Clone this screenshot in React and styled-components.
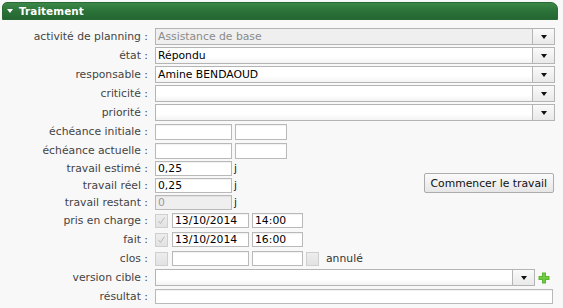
import React from "react";
import styled, { createGlobalStyle } from "styled-components";

const GlobalStyle = createGlobalStyle`
  html, body {
    margin: 0;
    padding: 0;
    background: #f8f8f8;
  }
  body {
    font-family: "DejaVu Sans", Verdana, sans-serif;
    font-size: 10.8px;
    color: #333;
  }
`;

const StPanel = styled.div`
  width: 563px;
  height: 308px;
  padding: 2px 0 0 2px;
  box-sizing: border-box;
  overflow: hidden;
`;

const StHeader = styled.div`
  display: flex;
  align-items: center;
  gap: 6px;
  width: 556px;
  height: 18px;
  box-sizing: border-box;
  padding-left: 4px;
  border-radius: 5px 7px 0 0;
  background: linear-gradient(#3c8748 0%, #2b7339 50%, #236631 100%);
  border: 1px solid #2a6a35;
  color: #fff;
  font-weight: bold;
  font-size: 10.4px;
  letter-spacing: 0.1px;
`;

const Caret = styled.span`
  width: 0;
  height: 0;
  border-left: 3px solid transparent;
  border-right: 3px solid transparent;
  border-top: 4px solid #fff;
`;

const StForm = styled.div`
  display: flex;
  flex-direction: column;
  padding-top: 7px;
`;

const Row = styled.div`
  display: flex;
  align-items: center;
  height: ${(p) => p.$h || 19}px;
`;

const Label = styled.div`
  width: 146px;
  flex: none;
  text-align: right;
  margin-right: 7px;
  white-space: nowrap;
  color: #444;
`;

const Select = styled.div`
  display: flex;
  align-items: stretch;
  width: ${(p) => p.$w || 400}px;
  height: ${(p) => p.$h || 17}px;
  box-sizing: border-box;
  border: 1px solid #b4b4b4;
  background: ${(p) =>
    p.$disabled ? "#efefef" : "linear-gradient(#ffffff 0%, #ffffff 60%, #f3f3f3 100%)"};
  color: ${(p) => (p.$disabled ? "#8a8a8a" : "#000")};
`;

const SelectValue = styled.div`
  flex: 1;
  display: flex;
  align-items: center;
  padding-left: 2px;
  white-space: nowrap;
  overflow: hidden;
`;

const SelectButton = styled.div`
  width: 21px;
  flex: none;
  display: flex;
  align-items: center;
  justify-content: center;
  border-left: 1px solid #b4b4b4;
  background: linear-gradient(#fafafa, #e9e9e9);
  &::after {
    content: "";
    border-left: 3.5px solid transparent;
    border-right: 3.5px solid transparent;
    border-top: 4px solid #111;
  }
`;

const Input = styled.div`
  width: ${(p) => p.$w || 76}px;
  height: ${(p) => p.$h || 16}px;
  box-sizing: border-box;
  flex: none;
  border: 1px solid #b9b9b9;
  box-shadow: inset 0 1px 1px rgba(0, 0, 0, 0.06);
  background: ${(p) => (p.$disabled ? "#efefef" : "#fff")};
  color: ${(p) => (p.$disabled ? "#9a9a9a" : "#000")};
  display: flex;
  align-items: center;
  padding-left: 2px;
  margin-right: ${(p) => p.$mr ?? 3}px;
  white-space: nowrap;
  overflow: hidden;
`;

const Unit = styled.span`
  color: #222;
`;

const Check = styled.div`
  width: 13px;
  height: 14px;
  box-sizing: border-box;
  flex: none;
  border: 1px solid #cfcfcf;
  background: linear-gradient(#ededed, #e2e2e2);
  margin-right: 4px;
  display: flex;
  align-items: center;
  justify-content: center;
`;

const Side = styled.span`
  margin-left: 3px;
  color: #333;
`;

const TravailGroup = styled.div`
  display: flex;
  align-items: flex-start;
`;

const TravailRows = styled.div`
  display: flex;
  flex-direction: column;
`;

const Button = styled.button`
  margin-left: auto;
  margin-top: 13px;
  margin-right: 9px;
  height: 20px;
  padding: 0 6px;
  font-family: inherit;
  font-size: 10.8px;
  color: #111;
  border: 1px solid #acacac;
  border-radius: 2px;
  background: linear-gradient(#fbfbfb, #e6e6e6);
`;

const Plus = styled.svg`
  margin-left: 3px;
  flex: none;
`;

const CheckMark = () => (
  <svg width="9" height="9" viewBox="0 0 9 9">
    <path d="M1.5 5 L3.5 7.5 L7.5 1.5" fill="none" stroke="#b8b8b8" strokeWidth="1" />
  </svg>
);

const SelectField = ({ value, disabled, w }) => (
  <Select $disabled={disabled} $w={w}>
    <SelectValue>{value}</SelectValue>
    <SelectButton />
  </Select>
);

const App = () => {
  return (
    <>
      <GlobalStyle />
      <StPanel>
        <StHeader>
          <Caret />
          Traitement
        </StHeader>
        <StForm>
          <Row>
            <Label>activité de planning :</Label>
            <SelectField value="Assistance de base" disabled />
          </Row>
          <Row>
            <Label>état :</Label>
            <SelectField value="Répondu" />
          </Row>
          <Row>
            <Label>responsable :</Label>
            <SelectField value="Amine BENDAOUD" />
          </Row>
          <Row>
            <Label>criticité :</Label>
            <SelectField value="" />
          </Row>
          <Row>
            <Label>priorité :</Label>
            <SelectField value="" />
          </Row>
          <Row>
            <Label>échéance initiale :</Label>
            <Input $w={77} />
            <Input $w={52} />
          </Row>
          <Row>
            <Label>échéance actuelle :</Label>
            <Input $w={77} />
            <Input $w={52} />
          </Row>
          <TravailGroup>
            <TravailRows>
              <Row $h={17}>
                <Label>travail estimé :</Label>
                <Input $w={77} $h={15} $mr={2}>0,25</Input>
                <Unit>j</Unit>
              </Row>
              <Row $h={17}>
                <Label>travail réel :</Label>
                <Input $w={77} $h={15} $mr={2}>0,25</Input>
                <Unit>j</Unit>
              </Row>
              <Row $h={17}>
                <Label>travail restant :</Label>
                <Input $w={77} $h={15} $mr={2} $disabled>0</Input>
                <Unit>j</Unit>
              </Row>
            </TravailRows>
            <Button>Commencer le travail</Button>
          </TravailGroup>
          <Row>
            <Label>pris en charge :</Label>
            <Check><CheckMark /></Check>
            <Input $w={77} $h={15}>13/10/2014</Input>
            <Input $w={51} $h={15}>14:00</Input>
          </Row>
          <Row>
            <Label>fait :</Label>
            <Check><CheckMark /></Check>
            <Input $w={77} $h={15}>13/10/2014</Input>
            <Input $w={51} $h={15}>16:00</Input>
          </Row>
          <Row>
            <Label>clos :</Label>
            <Check />
            <Input $w={77} $h={15} />
            <Input $w={51} $h={15} />
            <Check />
            <Side>annulé</Side>
          </Row>
          <Row>
            <Label>version cible :</Label>
            <SelectField value="" w={380} />
            <Plus width="12" height="12" viewBox="0 0 12 12">
              <path d="M4 0.5 H8 V4 H11.5 V8 H8 V11.5 H4 V8 H0.5 V4 H4 Z" fill="#5cb531" />
              <path d="M5 1.5 H7 V5 H10.5 V7 H7 V10.5 H5 V7 H1.5 V5 H5 Z" fill="#6fcb3f" />
            </Plus>
          </Row>
          <Row>
            <Label>résultat :</Label>
            <Input $w={398} $h={15} />
          </Row>
        </StForm>
      </StPanel>
    </>
  );
};

export default App;
